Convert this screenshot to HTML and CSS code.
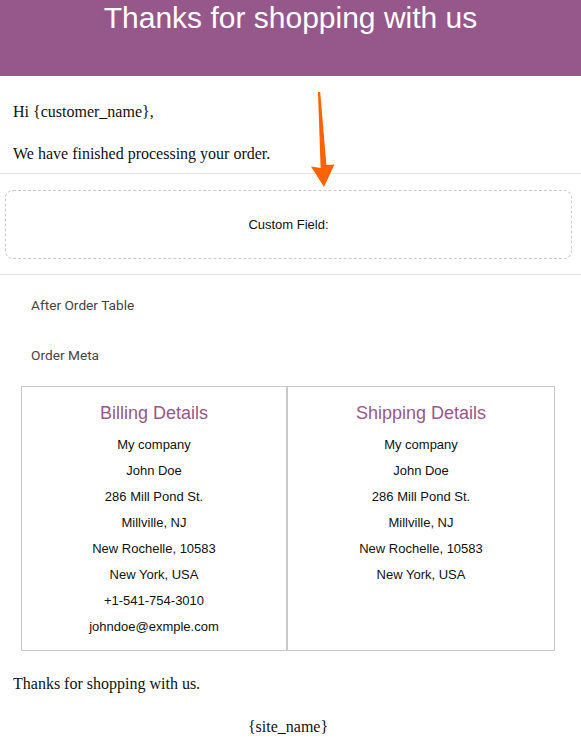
FILE: index.html
```html
<!DOCTYPE html>
<html lang="en">
<head>
<meta charset="utf-8">
<title>Thanks for shopping with us</title>
<link rel="stylesheet" href="styles.css">
</head>
<body>
<div class="email">
  <header class="email-header">
    <h1 class="email-title">Thanks for shopping with us</h1>
  </header>

  <section class="intro">
    <p class="intro-line">Hi {customer_name},</p>
    <p class="intro-line">We have finished processing your order.</p>
  </section>

  <div class="rule"></div>

  <div class="custom-field">Custom Field:</div>

  <div class="rule"></div>

  <section class="meta">
    <p class="meta-line">After Order Table</p>
    <p class="meta-line">Order Meta</p>
  </section>

  <div class="addresses">
    <div class="address address-billing">
      <h2 class="address-title">Billing Details</h2>
      <div class="address-line">My company</div>
      <div class="address-line">John Doe</div>
      <div class="address-line">286 Mill Pond St.</div>
      <div class="address-line">Millville, NJ</div>
      <div class="address-line">New Rochelle, 10583</div>
      <div class="address-line">New York, USA</div>
      <div class="address-line">+1-541-754-3010</div>
      <div class="address-line">johndoe@exmple.com</div>
    </div>
    <div class="address address-shipping">
      <h2 class="address-title">Shipping Details</h2>
      <div class="address-line">My company</div>
      <div class="address-line">John Doe</div>
      <div class="address-line">286 Mill Pond St.</div>
      <div class="address-line">Millville, NJ</div>
      <div class="address-line">New Rochelle, 10583</div>
      <div class="address-line">New York, USA</div>
    </div>
  </div>

  <footer class="closing">
    <p class="closing-line">Thanks for shopping with us.</p>
    <p class="closing-line closing-site">{site_name}</p>
  </footer>

  <svg class="pointer-arrow" width="45" height="110" viewBox="0 0 45 110" aria-hidden="true">
    <polygon points="18,7 20.2,7 26.4,80 34.4,79.5 24,102 11,81.5 20.6,83" fill="#ff6200"/>
  </svg>
</div>
</body>
</html>
```

FILE: styles.css
```css
html, body {
  margin: 0;
  padding: 0;
  background: #ffffff;
}

.email {
  position: relative;
  width: 581px;
  min-height: 750px;
  font-family: "Liberation Serif", "Times New Roman", serif;
  color: #111;
}

.email-header {
  height: 76px;
  background: #96588a;
}

.email-title {
  margin: 0;
  font-family: "Liberation Sans", Arial, sans-serif;
  font-size: 30px;
  font-weight: normal;
  line-height: 35px;
  color: #ffffff;
  text-align: center;
}

.intro {
  padding: 23px 12px 7px 13px;
}

.intro-line {
  margin: 0 0 16px;
  font-size: 16px;
  line-height: 25.6px;
}

.intro-line:last-child {
  margin-bottom: 0;
}

.rule {
  height: 1px;
  background: #e4e4e4;
}

.custom-field {
  display: flex;
  align-items: center;
  justify-content: center;
  height: 67px;
  margin: 16px 9px 15px 5px;
  border: 1px dashed #c9c9c9;
  border-radius: 8px;
  font-family: "Liberation Sans", Arial, sans-serif;
  font-size: 13px;
  color: #111;
}

.meta {
  display: flex;
  flex-direction: column;
  gap: 30px;
  padding: 20px 0 21px 31px;
}

.meta-line {
  margin: 0;
  font-family: Roboto, Inter, sans-serif;
  font-size: 13.7px;
  line-height: 20px;
  color: #444;
}

.addresses {
  display: grid;
  grid-template-columns: 1fr 1fr;
  margin: 0 26px 0 21px;
  border: 1px solid #c9c9cc;
}

.address {
  padding: 15px 0 10px;
  text-align: center;
  font-family: "Liberation Sans", Arial, sans-serif;
}

.address-billing {
  border-right: 2px solid #c9c9cc;
}

.address-title {
  margin: 0 0 8px;
  font-size: 18px;
  font-weight: normal;
  line-height: 22px;
  color: #96588a;
}

.address-line {
  font-size: 13px;
  line-height: 26px;
  color: #111;
}

.closing {
  padding: 20px 13px 0;
}

.closing-line {
  margin: 0;
  font-size: 16px;
  line-height: 25.6px;
}

.closing-site {
  margin-top: 17px;
  text-align: center;
  padding-right: 5px;
}

.pointer-arrow {
  position: absolute;
  left: 300px;
  top: 85px;
}
```
